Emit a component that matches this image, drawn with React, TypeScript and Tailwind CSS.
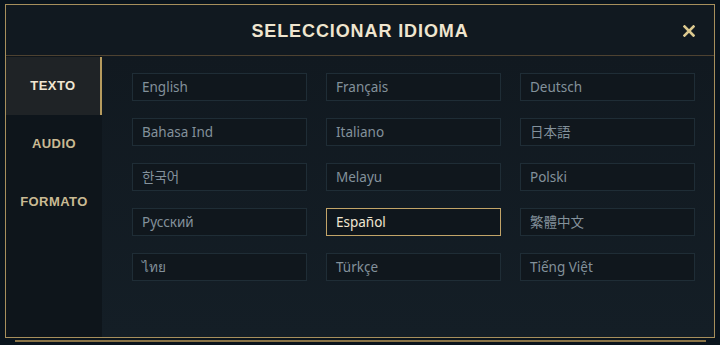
const LANGS = [
  'English', 'Français', 'Deutsch',
  'Bahasa Ind', 'Italiano', '日本語',
  '한국어', 'Melayu', 'Polski',
  'Русский', 'Español', '繁體中文',
  'ไทย', 'Türkçe', 'Tiếng Việt',
]

const TABS = ['TEXTO', 'AUDIO', 'FORMATO']

export default function App() {
  const selected = 'Español'

  return (
    <div className="w-[720px] h-[345px] bg-[#0a141d] overflow-hidden relative">
      {/* ── Frame ── */}
      <div className="absolute left-[5px] top-[4px] w-[710px] h-[334px] border border-[#a78f5c] bg-[#111920] flex flex-col">
        {/* Header */}
        <div className="h-[51px] shrink-0 border-b border-[#4e4231] flex items-center justify-center pt-[3px] relative">
          <h1
            className="text-[18px] font-bold tracking-[0.05em] text-[#efe5cf]"
            style={{ fontFamily: '"Liberation Sans", Arial, sans-serif' }}
          >
            SELECCIONAR IDIOMA
          </h1>
          <button className="absolute right-[19px] top-[20px] w-[12px] h-[12px]">
            <svg viewBox="0 0 12 12" className="w-[12px] h-[12px]">
              <path d="M1.5 1.5 L10.5 10.5 M10.5 1.5 L1.5 10.5" stroke="#dcc98f" strokeWidth="2.6" strokeLinecap="square" />
            </svg>
          </button>
        </div>

        <div className="flex flex-1 min-h-0">
          {/* Sidebar */}
          <div className="w-[96px] shrink-0 bg-[#0e151b] pt-[1px] flex flex-col">
            {TABS.map((t, i) => (
              <div
                key={t}
                className={
                  i === 0
                    ? 'h-[58px] flex items-center justify-center bg-[#1f2326] border-r-2 border-[#b69b5e] text-[#f0e6d2]'
                    : 'h-[58px] flex items-center justify-center text-[#c9ba93]'
                }
              >
                <span
                  className="text-[13px] font-bold tracking-[0.035em]"
                  style={{ fontFamily: '"Liberation Sans", Arial, sans-serif' }}
                >
                  {t}
                </span>
              </div>
            ))}
          </div>

          {/* Languages */}
          <div className="flex-1 bg-gradient-to-b from-[#111920] to-[#141e26] pl-[30px] pt-[17px]">
            <div className="grid grid-cols-[175px_175px_175px] gap-x-[19px] gap-y-[17px]">
              {LANGS.map(l => (
                <div
                  key={l}
                  className={
                    l === selected
                      ? 'h-[28px] flex items-center pl-[9px] border border-[#c2a468] bg-[#0f161c] text-[#f0e6d2]'
                      : 'h-[28px] flex items-center pl-[9px] border border-[#1f2d36] bg-[#10171d] text-[#83919b]'
                  }
                >
                  <span
                    className="text-[13.5px]"
                    style={{ fontFamily: '"Noto Sans", "Noto Sans CJK JP", "DejaVu Sans", sans-serif' }}
                  >
                    {l}
                  </span>
                </div>
              ))}
            </div>
          </div>
        </div>
      </div>

      {/* bottom trim */}
      <div className="absolute left-[15px] top-[340px] w-[691px] h-[2px] bg-[#8a7447]" />
    </div>
  )
}
